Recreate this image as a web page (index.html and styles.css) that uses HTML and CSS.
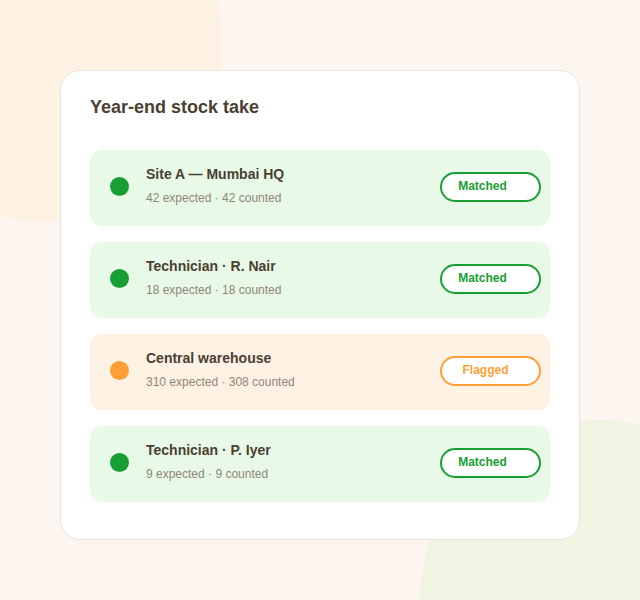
FILE: index.html
```html
<!DOCTYPE html>
<html lang="en">
<head>
<meta charset="utf-8">
<title>Year-end stock take</title>
<link rel="stylesheet" href="styles.css">
</head>
<body>
<main class="card">
  <h1 class="title">Year-end stock take</h1>
  <ul class="list">
    <li class="row ok">
      <span class="dot"></span>
      <div class="info">
        <div class="name">Site A — Mumbai HQ</div>
        <div class="sub">42 expected · 42 counted</div>
      </div>
      <span class="badge">Matched</span>
    </li>
    <li class="row ok">
      <span class="dot"></span>
      <div class="info">
        <div class="name">Technician · R. Nair</div>
        <div class="sub">18 expected · 18 counted</div>
      </div>
      <span class="badge">Matched</span>
    </li>
    <li class="row warn">
      <span class="dot"></span>
      <div class="info">
        <div class="name">Central warehouse</div>
        <div class="sub">310 expected · 308 counted</div>
      </div>
      <span class="badge">Flagged</span>
    </li>
    <li class="row ok">
      <span class="dot"></span>
      <div class="info">
        <div class="name">Technician · P. Iyer</div>
        <div class="sub">9 expected · 9 counted</div>
      </div>
      <span class="badge">Matched</span>
    </li>
  </ul>
</main>
</body>
</html>
```
FILE: styles.css
```css
html, body {
  margin: 0;
  padding: 0;
}
body {
  width: 640px;
  height: 600px;
  box-sizing: border-box;
  padding-top: 70px;
  display: flex;
  justify-content: center;
  align-items: flex-start;
  font-family: "Liberation Sans", Arial, sans-serif;
  background:
    radial-gradient(circle 180px at 42px 42px, #fef2e4 179.5px, rgba(254,242,228,0) 180.5px),
    radial-gradient(circle 180px at 600px 600px, #f1f4e3 179.5px, rgba(241,244,227,0) 180.5px),
    #fdf6f0;
  overflow: hidden;
}
.card {
  width: 520px;
  height: 470px;
  box-sizing: border-box;
  background: #ffffff;
  border: 1px solid #e7e4dc;
  border-radius: 20px;
  padding: 25px 29px 37px;
}
.title {
  margin: 0 0 32px;
  font-size: 18px;
  line-height: 22px;
  font-weight: 700;
  color: #4a3f33;
}
.list {
  list-style: none;
  margin: 0;
  padding: 0;
  display: flex;
  flex-direction: column;
  gap: 16px;
}
.row {
  height: 76px;
  box-sizing: border-box;
  border-radius: 12px;
  padding: 0 9px 3px 20px;
  display: flex;
  align-items: center;
}
.row.ok { background: #e8f9e7; }
.row.warn { background: #fef2e4; }
.dot {
  width: 19px;
  height: 19px;
  border-radius: 50%;
  flex: none;
  margin-right: 17px;
}
.ok .dot { background: #189f33; }
.warn .dot { background: #fe9f33; }
.info {
  flex: 1;
  display: flex;
  flex-direction: column;
  gap: 6px;
  margin-bottom: 1px;
}
.name {
  font-size: 14px;
  line-height: 18px;
  font-weight: 700;
  color: #4a3f33;
}
.sub {
  font-size: 12px;
  line-height: 18px;
  color: #8f8778;
}
.badge {
  flex: none;
  width: 101px;
  height: 30px;
  box-sizing: border-box;
  border: 2px solid;
  border-radius: 15px;
  background: #ffffff;
  padding: 4px 25px 6px 9px;
  font-size: 12px;
  line-height: 16px;
  font-weight: 700;
  text-align: center;
}
.warn .badge { padding-left: 12px; padding-right: 22px; }
.ok .badge { border-color: #189f33; color: #189f33; }
.warn .badge { border-color: #fe9f33; color: #fe9f33; }
```
